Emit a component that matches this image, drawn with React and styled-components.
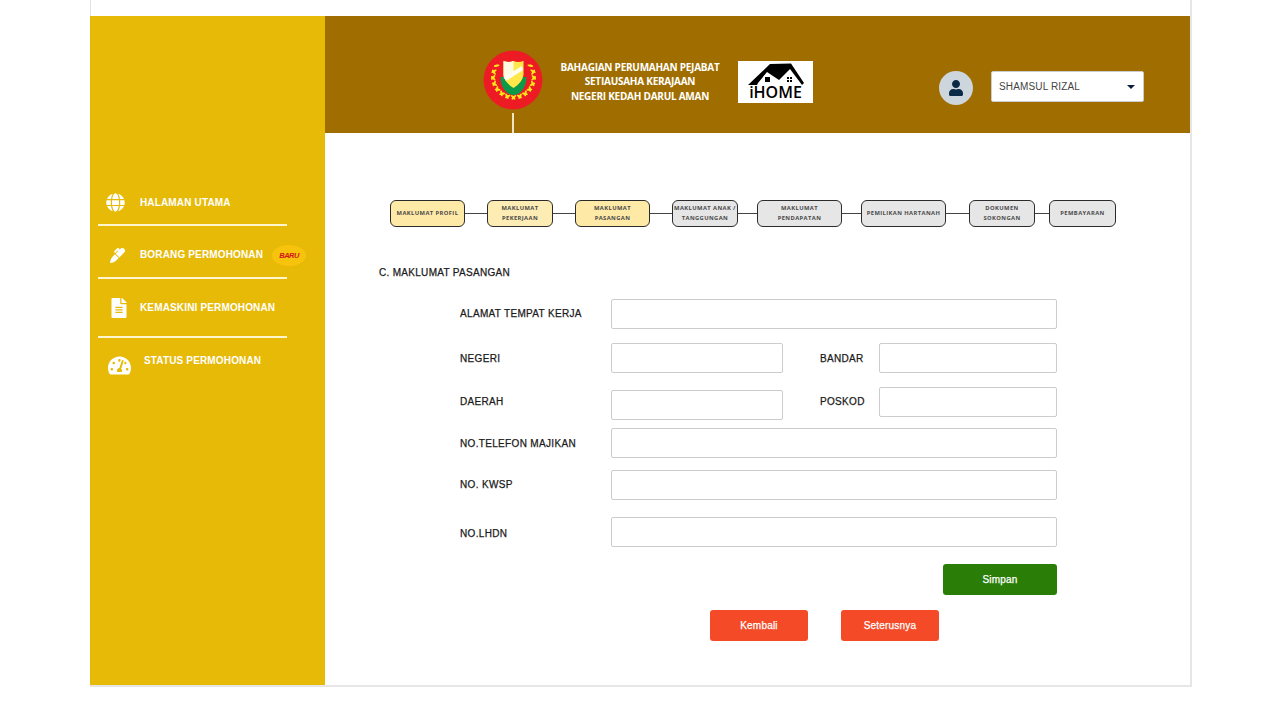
import React from "react";
import styled, { createGlobalStyle } from "styled-components";
import { FaGlobe, FaMarker, FaFileAlt, FaTachometerAlt, FaUser } from "react-icons/fa";

const steps = [
  { text: "MAKLUMAT PROFIL", width: 75, tone: "done" },
  { text: "MAKLUMAT\nPEKERJAAN", width: 66, tone: "visited", gap: 22 },
  { text: "MAKLUMAT\nPASANGAN", width: 75, tone: "done", gap: 22 },
  { text: "MAKLUMAT ANAK /\nTANGGUNGAN", width: 66, gap: 22 },
  { text: "MAKLUMAT\nPENDAPATAN", width: 85, gap: 19 },
  { text: "PEMILIKAN HARTANAH", width: 85, gap: 19 },
  { text: "DOKUMEN\nSOKONGAN", width: 66, gap: 23 },
  { text: "PEMBAYARAN", width: 67, gap: 14 },
];

// wreath leaves, angle measured from the bottom of the emblem
const leaves = Array.from({ length: 7 }, (_, i) => 9 + i * 17.5);

function Emblem() {
  return (
    <svg width="60" height="60" viewBox="0 0 60 60">
      <circle cx="30" cy="30" r="29.5" fill="#ed1c24" />
      {leaves.map((a) => (
        <g key={a} fill="#ffe81a">
          {[a, -a].map((r) => (
            <g key={r} transform={`rotate(${r} 30.5 27)`}>
              <ellipse cx="27" cy="47" rx="1.1" ry="3" transform="rotate(-35 27 47)" />
              <ellipse cx="34" cy="47" rx="1.1" ry="3" transform="rotate(35 34 47)" />
            </g>
          ))}
        </g>
      ))}
      <path d="M17.5 27 A13 18 0 0 0 43.5 27 L40 27 A10 12 0 0 1 21 27Z" fill="#0a9a4a" />
      <path d="M20.5 11 Q26 13 30.5 11 Q35 13 40.5 11 L40.5 25 Q39 33 30.5 38 Q22 33 20.5 25Z" fill="#ffe94a" />
      <path d="M20.5 11 Q26 13 30.5 11 L30.5 22 L21 29 L20.5 25Z" fill="#fffbe0" />
      <path d="M21 27 L39 16 L40 20 L23 31Z" fill="#fffef0" />
    </svg>
  );
}

function HouseMark() {
  return (
    <svg width="75" height="26" viewBox="0 0 75 26">
      <path d="M10 24 L32 3 L53 2.5 L66 22 L64 24 L52 8 L41 19 L35 15 L29 11 L20 22 L19 24Z" fill="#000" />
      <rect x="27" y="16" width="5" height="5" fill="#000" />
      <rect x="49" y="16" width="2" height="2" fill="#000" />
      <rect x="52" y="16" width="2" height="2" fill="#000" />
      <rect x="49" y="19" width="2" height="2" fill="#000" />
      <rect x="52" y="19" width="2" height="2" fill="#000" />
    </svg>
  );
}

export default function App() {
  return (
    <>
      <GlobalStyle />
      <Frame>
        <Sidebar>
          <NavItem>
            <NavIcon><FaGlobe size={19} /></NavIcon>
            <NavLabel>HALAMAN UTAMA</NavLabel>
          </NavItem>
          <Divider />
          <NavItem $top={14}>
            <NavIcon $shift={4}><FaMarker size={15} /></NavIcon>
            <NavLabel $lift={2}>BORANG PERMOHONAN</NavLabel>
            <Badge>BARU</Badge>
          </NavItem>
          <Divider />
          <NavItem $top={14}>
            <NavIcon $shift={3}><FaFileAlt size={20} /></NavIcon>
            <NavLabel $lift={2}>KEMASKINI PERMOHONAN</NavLabel>
          </NavItem>
          <Divider $top={13} />
          <NavItem $top={8}>
            <NavIcon $shift={2} $drop={8}><FaTachometerAlt size={23} /></NavIcon>
            <NavLabel $indent={4} $lift={2}>STATUS PERMOHONAN</NavLabel>
          </NavItem>
        </Sidebar>

        <Main>
          <Header>
            <EmblemColumn>
              <Emblem />
              <Stem />
            </EmblemColumn>
            <Agency>
              BAHAGIAN PERUMAHAN PEJABAT
              <br />
              SETIAUSAHA KERAJAAN
              <br />
              NEGERI KEDAH DARUL AMAN
            </Agency>
            <HomeLogo>
              <HouseMark />
              <HomeName>iHOME</HomeName>
            </HomeLogo>
            <Avatar><FaUser size={16} /></Avatar>
            <UserSelect>
              <span>SHAMSUL RIZAL</span>
              <Caret />
            </UserSelect>
          </Header>

          <Content>
            <Stepper>
              {steps.map((s) => (
                <React.Fragment key={s.text}>
                  {s.gap && <Connector $width={s.gap} />}
                  <Step $width={s.width} $tone={s.tone}>{s.text}</Step>
                </React.Fragment>
              ))}
            </Stepper>

            <SectionTitle>C. MAKLUMAT PASANGAN</SectionTitle>

            <Form>
              <Row>
                <Label $lift={1}>ALAMAT TEMPAT KERJA</Label>
                <Input />
              </Row>
              <Row $top={14}>
                <Label>NEGERI</Label>
                <SmallInput />
                <SideLabel>BANDAR</SideLabel>
                <SideInput />
              </Row>
              <Row $top={14} $height={33}>
                <Label $lift={4}>DAERAH</Label>
                <SmallInput $low />
                <SideLabel $lift={4}>POSKOD</SideLabel>
                <SideInput $high />
              </Row>
              <Row $top={8}>
                <Label>NO.TELEFON MAJIKAN</Label>
                <Input />
              </Row>
              <Row $top={12}>
                <Label $lift={1}>NO. KWSP</Label>
                <Input />
              </Row>
              <Row $top={17}>
                <Label $drop={2}>NO.LHDN</Label>
                <Input />
              </Row>
              <SaveRow>
                <Button $color="#2a7e08" $width={114}>Simpan</Button>
              </SaveRow>
              <NavButtons>
                <Button $color="#f44a27">Kembali</Button>
                <Button $color="#f44a27">Seterusnya</Button>
              </NavButtons>
            </Form>
          </Content>
        </Main>
      </Frame>
    </>
  );
}

const GlobalStyle = createGlobalStyle`
  html, body {
    margin: 0;
    padding: 0;
    background: #fff;
    overflow: hidden;
  }
  * {
    box-sizing: border-box;
  }
  body {
    font-family: "Liberation Sans", Arial, sans-serif;
  }
`;

const Frame = styled.div`
  width: 1102px;
  height: 687px;
  margin-left: 90px;
  padding-top: 16px;
  display: grid;
  grid-template-columns: 234px 1fr;
  border-left: 1px solid #e2e2e2;
  border-right: 2px solid #e6e6e6;
  border-bottom: 2px solid #e6e6e6;
`;

const Sidebar = styled.nav`
  margin-left: -1px;
  background: #e6ba07;
  padding: 171px 0 0 8px;
`;

const NavItem = styled.div`
  height: 30px;
  margin-top: ${({ $top }) => $top || 0}px;
  display: flex;
  align-items: center;
  color: #fff;
`;

const NavIcon = styled.div`
  width: 42px;
  height: 100%;
  flex: none;
  padding: ${({ $drop }) => $drop || 0}px 0 0 ${({ $shift }) => 8 + ($shift || 0)}px;
  display: flex;
  align-items: center;
`;

const NavLabel = styled.div`
  margin-left: ${({ $indent }) => $indent || 0}px;
  margin-bottom: ${({ $lift }) => $lift || 0}px;
  font-size: 10px;
  font-weight: 700;
  letter-spacing: 0.15px;
  white-space: nowrap;
`;

const Badge = styled.div`
  width: 34px;
  height: 21px;
  margin-left: 9px;
  border-radius: 50%;
  background: #f8c30c;
  color: #d3141c;
  font-size: 7.5px;
  font-weight: 700;
  font-style: italic;
  letter-spacing: -0.5px;
  display: flex;
  align-items: center;
  justify-content: center;
`;

const Divider = styled.div`
  width: 189px;
  height: 2px;
  margin-top: ${({ $top }) => $top || 7}px;
  background: #fff6cf;
`;

const Main = styled.div`
  display: flex;
  flex-direction: column;
  min-width: 0;
`;

const Header = styled.header`
  height: 117px;
  flex: none;
  padding-left: 158px;
  background: #a06e00;
  display: flex;
  align-items: flex-start;
`;

const EmblemColumn = styled.div`
  width: 60px;
  height: 100%;
  padding-top: 34px;
  display: flex;
  flex-direction: column;
  align-items: center;
`;

const Stem = styled.div`
  width: 2px;
  flex: 1;
  margin-top: 3px;
  background: #f0e4c4;
`;

const Agency = styled.div`
  width: 160px;
  margin: 44px 0 0 17px;
  color: #fff;
  font-family: "Open Sans", sans-serif;
  font-size: 10px;
  font-weight: 700;
  letter-spacing: -0.25px;
  line-height: 14.3px;
  text-align: center;
  white-space: nowrap;
`;

const HomeLogo = styled.div`
  width: 75px;
  height: 42px;
  margin: 45px 0 0 18px;
  background: #fff;
  display: flex;
  flex-direction: column;
  align-items: center;
`;

const HomeName = styled.div`
  color: #000;
  font-family: "Open Sans", sans-serif;
  font-size: 16px;
  font-weight: 600;
  line-height: 11px;
`;

const Avatar = styled.div`
  width: 34px;
  height: 34px;
  margin: 55px 0 0 126px;
  border-radius: 50%;
  background: #cdd5dd;
  color: #0b2a48;
  display: flex;
  align-items: center;
  justify-content: center;
`;

const UserSelect = styled.div`
  width: 153px;
  height: 31px;
  margin: 55px 0 0 18px;
  padding: 0 8px 0 7px;
  border: 1px solid #ccc;
  border-radius: 2px;
  background: #fff;
  color: #444;
  font-size: 10px;
  letter-spacing: 0.15px;
  display: flex;
  align-items: center;
  justify-content: space-between;
`;

const Caret = styled.div`
  width: 0;
  height: 0;
  margin-top: 1px;
  border-left: 4px solid transparent;
  border-right: 4px solid transparent;
  border-top: 4px solid #0b1f3a;
`;

const Content = styled.main`
  flex: 1;
  padding: 67px 0 0 54px;
`;

const Stepper = styled.div`
  margin-left: 11px;
  display: flex;
  align-items: center;
`;

const toneColors = {
  done: "#ffe9a6",
  visited: "#fdecb4",
};

const Step = styled.div`
  width: ${({ $width }) => $width}px;
  height: 27px;
  flex: none;
  padding: 0;
  border: 1.5px solid #2b2b2b;
  border-radius: 6px;
  background: ${({ $tone }) => toneColors[$tone] || "#e6e6e6"};
  color: #4a4a4a;
  font-family: "Open Sans", sans-serif;
  font-size: 5.8px;
  font-weight: 700;
  letter-spacing: 0.4px;
  line-height: 9.5px;
  text-align: center;
  white-space: pre-line;
  display: flex;
  align-items: center;
  justify-content: center;
`;

const Connector = styled.div`
  width: ${({ $width }) => $width}px;
  height: 1.5px;
  flex: none;
  background: #444;
`;

const SectionTitle = styled.h2`
  margin: 40px 0 0;
  color: #1a1a1a;
  font-size: 10px;
  font-weight: 400;
  -webkit-text-stroke: 0.25px #1a1a1a;
  line-height: 12px;
  letter-spacing: 0.3px;
`;

const Form = styled.form`
  margin: 20px 0 0 81px;
  width: 597px;
`;

const Row = styled.div`
  height: ${({ $height }) => $height || 30}px;
  margin-top: ${({ $top }) => $top || 0}px;
  display: flex;
  align-items: center;
`;

const Label = styled.label`
  width: 151px;
  flex: none;
  margin-top: ${({ $drop }) => $drop || 0}px;
  margin-bottom: ${({ $lift }) => $lift || 0}px;
  color: #1a1a1a;
  font-size: 10px;
  font-weight: 400;
  -webkit-text-stroke: 0.25px #1a1a1a;
  letter-spacing: 0.33px;
  white-space: nowrap;
`;

const Input = styled.input`
  width: 446px;
  height: 30px;
  padding: 0 8px;
  border: 1px solid #ccc;
  border-radius: 2px;
  outline: none;
  background: #fff;
`;

const SmallInput = styled(Input)`
  width: 172px;
  align-self: ${({ $low }) => ($low ? "flex-end" : "center")};
`;

const SideLabel = styled(Label)`
  width: 59px;
  margin-left: 37px;
`;

const SideInput = styled(Input)`
  width: 178px;
  align-self: ${({ $high }) => ($high ? "flex-start" : "center")};
`;

const SaveRow = styled.div`
  margin-top: 17px;
  display: flex;
  justify-content: flex-end;
`;

const NavButtons = styled.div`
  margin: 15px 0 0 250px;
  display: flex;
  gap: 33px;
`;

const Button = styled.button`
  width: ${({ $width }) => $width || 98}px;
  height: 31px;
  padding: 0;
  border: none;
  border-radius: 3px;
  background: ${({ $color }) => $color};
  color: #fff;
  font-family: "Liberation Sans", Arial, sans-serif;
  font-size: 10px;
  font-weight: 400;
  -webkit-text-stroke: 0.25px #fff;
  letter-spacing: 0.2px;
`;
